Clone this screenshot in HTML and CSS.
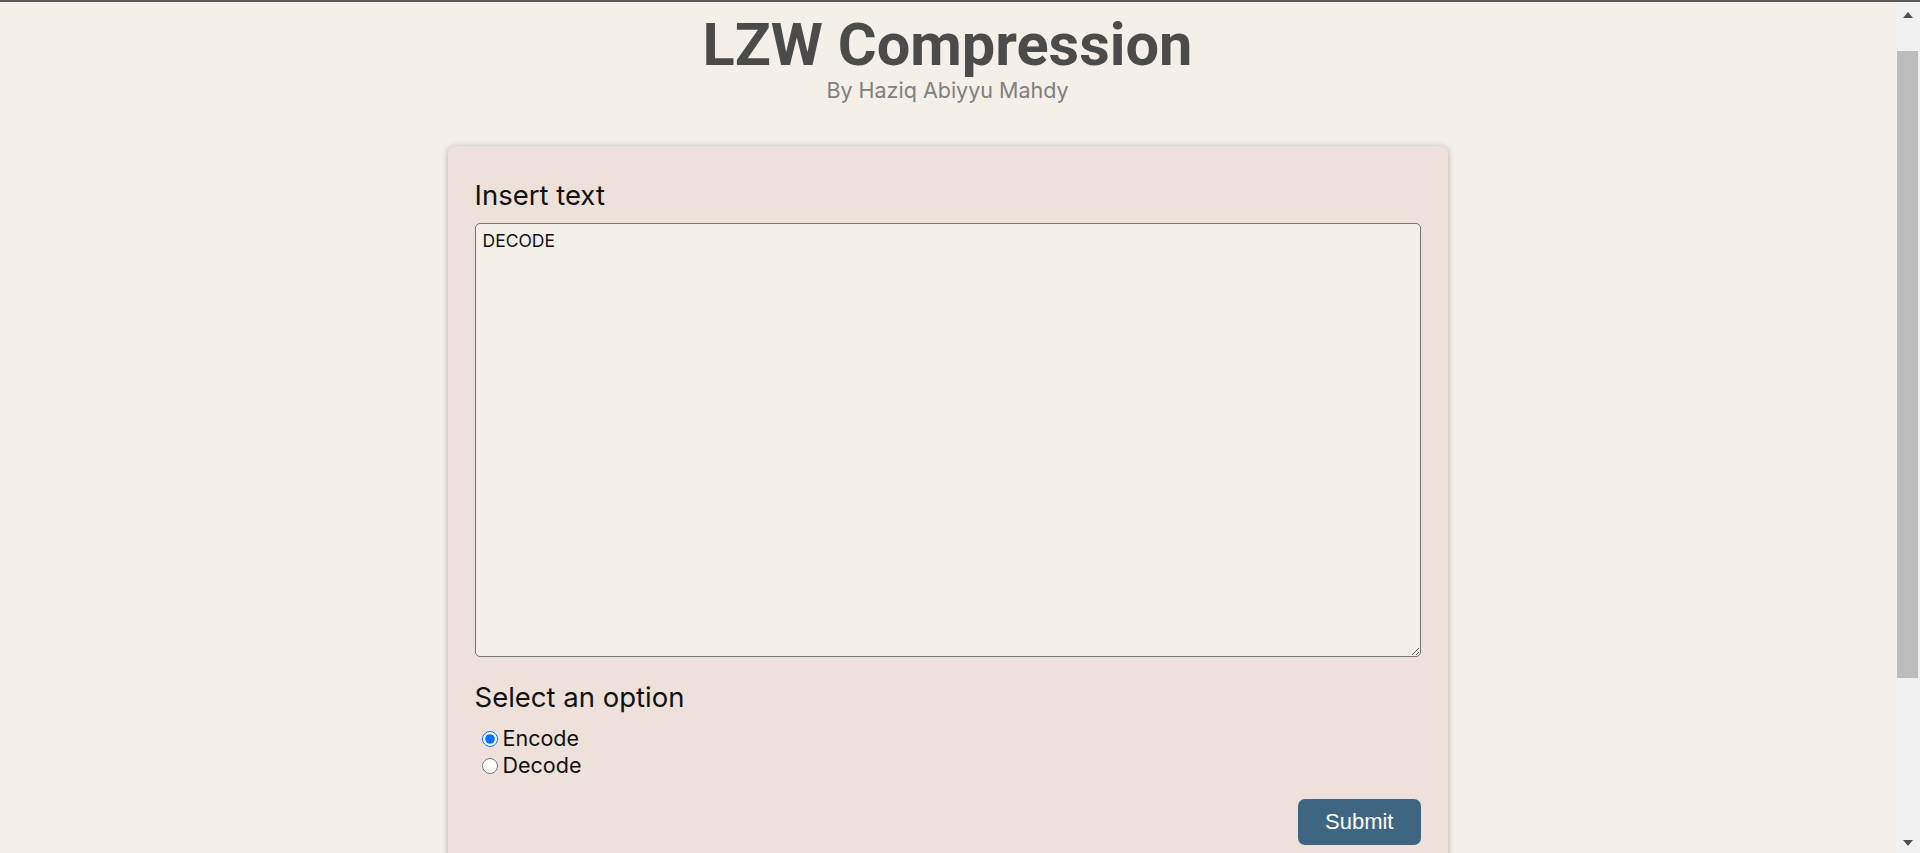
FILE: index.html
```html
<!DOCTYPE html>
<html lang="en">
<head>
<meta charset="utf-8">
<title>LZW Compression</title>
<link rel="stylesheet" href="styles.css">
</head>
<body>
<header class="top">
  <h1 class="title">LZW Compression</h1>
  <p class="subtitle">By Haziq Abiyyu Mahdy</p>
</header>
<main class="card">
  <form class="form">
    <label class="field-label" for="input">Insert text</label>
    <textarea id="input" class="text-input">DECODE</textarea>
    <p class="field-label field-label--spaced">Select an option</p>
    <div class="options">
      <label class="option"><input class="radio" type="radio" name="mode" checked>Encode</label>
      <label class="option"><input class="radio" type="radio" name="mode">Decode</label>
    </div>
    <div class="actions"><button type="button" class="submit">Submit</button></div>
  </form>
</main>
<div class="scrollbar" aria-hidden="true">
  <div class="scrollbar-btn scrollbar-btn--up"><span class="arrow arrow--up"></span></div>
  <div class="scrollbar-track"><div class="scrollbar-thumb"></div></div>
  <div class="scrollbar-btn scrollbar-btn--down"><span class="arrow arrow--down"></span></div>
</div>
</body>
</html>
```
FILE: styles.css
```css
html {
  border-top: 2px solid #5b5b5b;
  background: #f4efe9;
}
body {
  margin: 0;
  padding: 0 25px 243px 0;
  font-family: Inter, "Noto Sans", sans-serif;
  color: #111;
}
.top {
  padding-top: 13px;
  text-align: center;
}
.title {
  margin: 0;
  font-family: Roboto, "Liberation Sans", sans-serif;
  font-size: 59.5px;
  line-height: 60px;
  font-weight: 700;
  color: #4b4b4b;
}
.subtitle {
  margin: 2px 0 0;
  font-size: 21.5px;
  color: #808080;
}
.card {
  display: block;
  box-sizing: border-box;
  width: 1000px;
  margin: 43px auto 0;
  padding: 32px 27px 27px;
  background: #eee1da;
  border-radius: 7px;
  box-shadow: 0 1px 6px rgba(0, 0, 0, 0.28);
}
.form {
  display: flex;
  flex-direction: column;
}
.field-label {
  display: block;
  margin: 0;
  font-size: 27.5px;
  color: #111;
}
.field-label--spaced {
  margin-top: 23px;
}
.text-input {
  display: block;
  box-sizing: border-box;
  width: 100%;
  height: 434px;
  margin-top: 11px;
  padding: 6px 7px 4px;
  font-family: Inter, "Noto Sans", sans-serif;
  font-size: 17.5px;
  color: #111;
  background: #f4efe9;
  border: 1px solid #767676;
  border-radius: 5px;
}
.options {
  margin-top: 11px;
  display: flex;
  flex-direction: column;
}
.option {
  font-size: 21.5px;
  line-height: 27px;
  color: #111;
}
.radio {
  width: 16px;
  height: 16px;
  margin: 0 5px 0 7px;
  vertical-align: -1px;
}
.actions {
  display: flex;
  justify-content: flex-end;
  margin-top: 20px;
}
.submit {
  padding: 10px 27px;
  font-family: "Liberation Sans", Arial, sans-serif;
  font-size: 22px;
  color: #fff;
  background: #3e6682;
  border: 0;
  border-radius: 7px;
}
.scrollbar {
  position: fixed;
  top: 2px;
  right: 0;
  bottom: 0;
  width: 25px;
  display: flex;
  flex-direction: column;
  background: #f1f1f1;
}
.scrollbar-btn {
  display: flex;
  align-items: center;
  justify-content: center;
}
.scrollbar-btn--up {
  height: 26px;
}
.scrollbar-btn--down {
  height: 20px;
}
.scrollbar-track {
  flex: 1;
}
.scrollbar-thumb {
  height: 627px;
  margin: 23px 2px 0;
  background: #bcbcbc;
}
.arrow {
  width: 0;
  height: 0;
  border-left: 5.5px solid transparent;
  border-right: 5.5px solid transparent;
}
.arrow--up {
  border-bottom: 6px solid #505050;
}
.arrow--down {
  border-top: 6px solid #505050;
}
```
